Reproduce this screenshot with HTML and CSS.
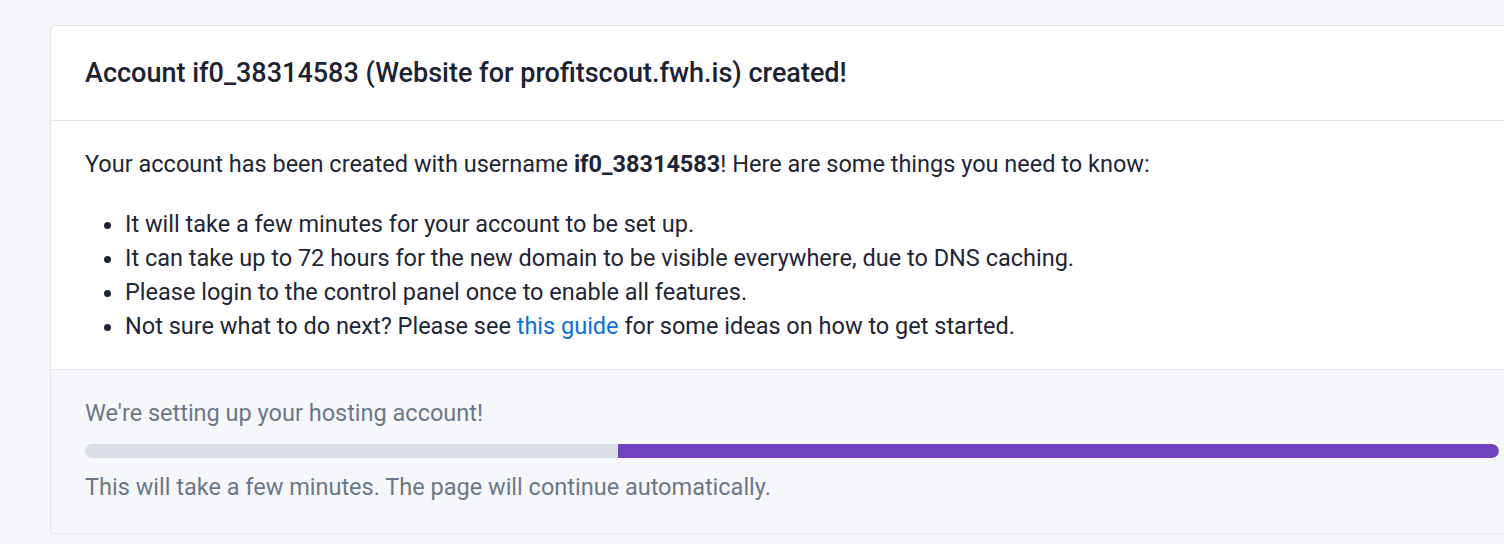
FILE: index.html
```html
<!DOCTYPE html>
<html lang="en">
<head>
<meta charset="utf-8">
<title>Account created</title>
<link rel="stylesheet" href="styles.css">
</head>
<body>
<div class="page">
  <div class="card">
    <div class="card-header">
      <h1 class="title">Account if0_38314583 (Website for profitscout.fwh.is) created!</h1>
    </div>
    <div class="card-body">
      <p class="intro">Your account has been created with username <strong>if0_38314583</strong>! Here are some things you need to know:</p>
      <ul class="notes">
        <li>It will take a few minutes for your account to be set up.</li>
        <li>It can take up to 72 hours for the new domain to be visible everywhere, due to DNS caching.</li>
        <li>Please login to the control panel once to enable all features.</li>
        <li>Not sure what to do next? Please see <a href="#" class="link">this guide</a> for some ideas on how to get started.</li>
      </ul>
    </div>
    <div class="card-footer">
      <p class="status">We're setting up your hosting account!</p>
      <div class="progress">
        <div class="progress-gap" style="width: 37.7%"></div>
        <div class="progress-bar"></div>
      </div>
      <p class="status">This will take a few minutes. The page will continue automatically.</p>
    </div>
  </div>
</div>
</body>
</html>
```

FILE: styles.css
```css
html, body {
  margin: 0;
  padding: 0;
  overflow: hidden;
  background: #f5f6fa;
  font-family: Roboto, "Liberation Sans", sans-serif;
  color: #1e2535;
}

.page {
  padding: 25px 0 0 50px;
}

.card {
  width: 1484px;
  background: #fff;
  border: 1px solid #e3e5ea;
  border-radius: 6px 6px 2px 2px;
  box-sizing: border-box;
}

.card-header {
  height: 95px;
  box-sizing: border-box;
  padding: 0 34px;
  display: flex;
  align-items: center;
  border-bottom: 1px solid #e3e5ea;
}

.title {
  margin: 0;
  font-size: 27px;
  font-weight: 500;
  line-height: 1.2;
  color: #1b2232;
}

.card-body {
  padding: 26px 34px 26px;
  font-size: 23.5px;
  line-height: 34px;
}

.intro {
  margin: 0 0 26px;
}

.intro strong {
  font-weight: 700;
}

.notes {
  margin: 0;
  padding-left: 40px;
}

.link {
  color: #0b6fd8;
  text-decoration: none;
}

.card-footer {
  background: #f6f7fb;
  border-top: 1px solid #e3e5ea;
  padding: 26px 34px 29px;
  font-size: 23.5px;
  line-height: 34px;
  color: #6b7789;
}

.status {
  margin: 0;
}

.progress {
  display: flex;
  height: 14px;
  margin: 14px 0 12px;
  background: #dadee5;
  border-radius: 7px;
  overflow: hidden;
  width: 1414px;
}

.progress-bar {
  flex: 1;
  background: #6f42c1;
  border-radius: 0 7px 7px 0;
}
```
